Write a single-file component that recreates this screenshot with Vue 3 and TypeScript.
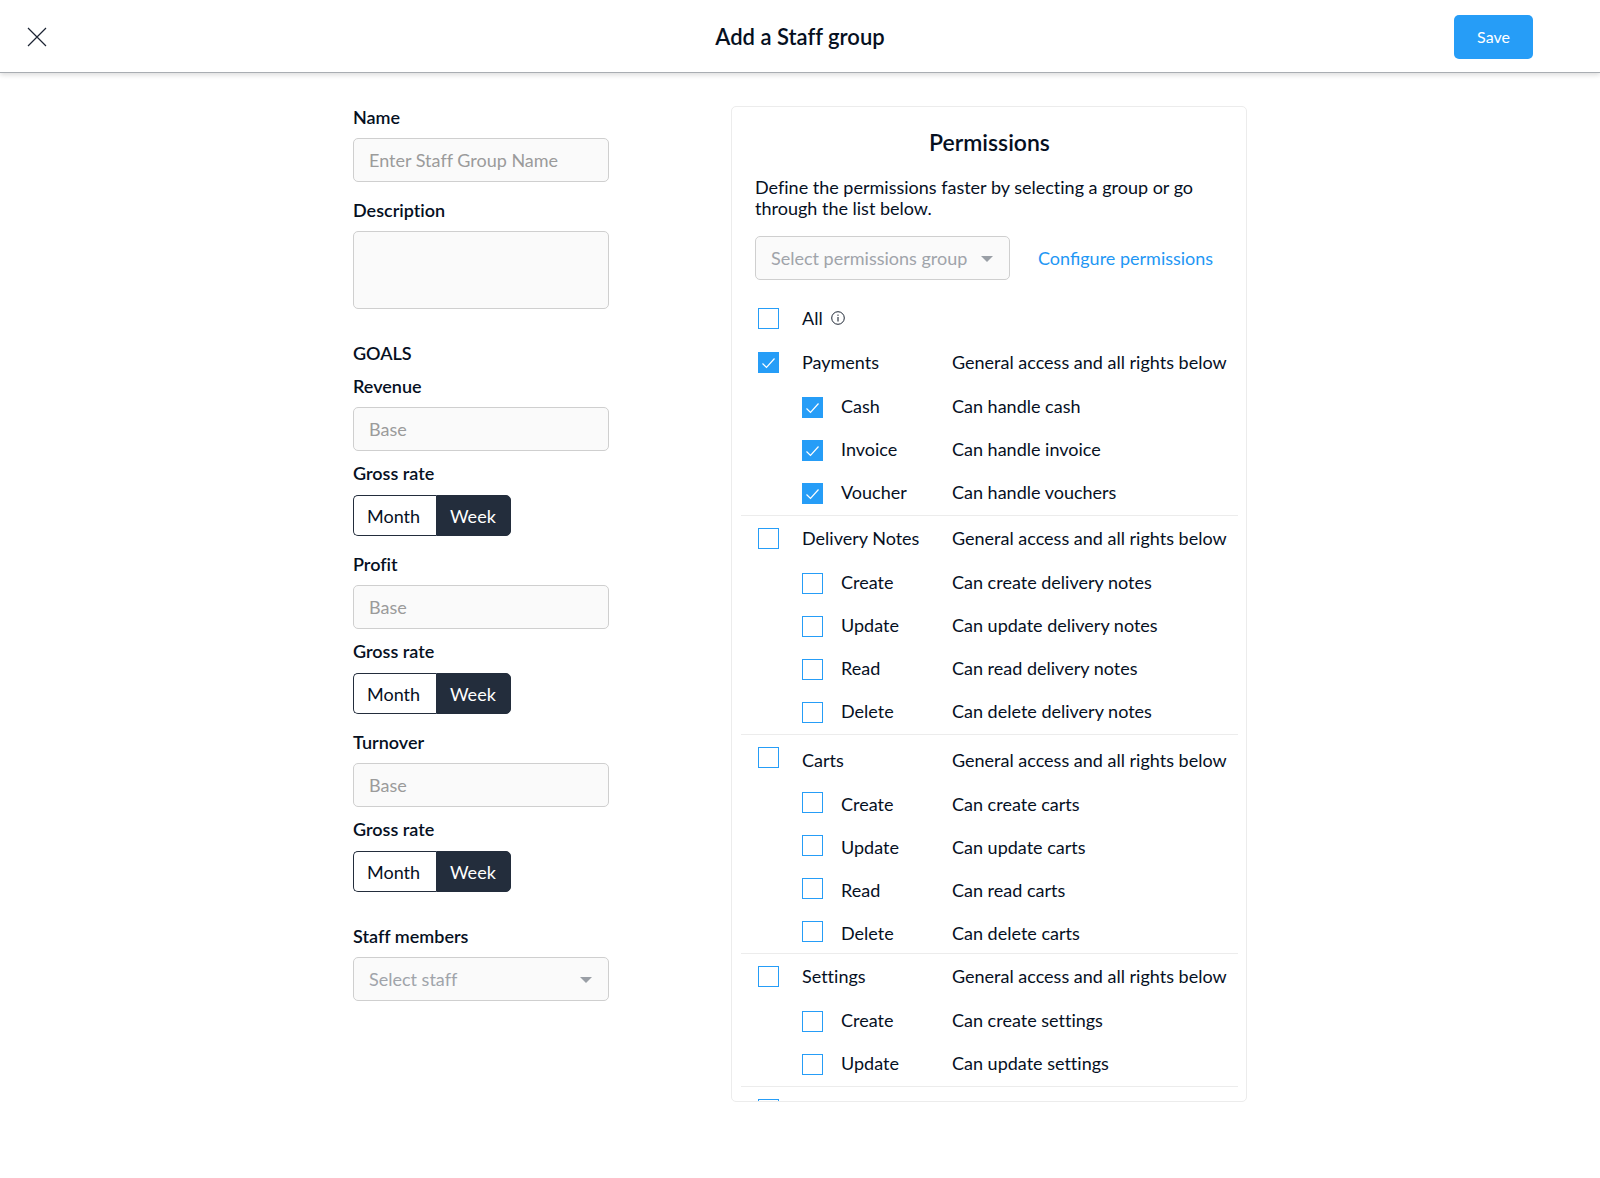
<script setup lang="ts">
import { reactive, ref } from 'vue'

type Period = 'Month' | 'Week'

interface Goal {
  id: string
  label: string
  base: string
  period: Period
}

interface Permission {
  id: string
  label: string
  hint: string
  checked: boolean
}

interface PermissionGroup extends Permission {
  loose?: boolean
  items: Permission[]
}

const periods: Period[] = ['Month', 'Week']

const name = ref('')
const description = ref('')
const staff = ref('')
const preset = ref('')
const all = ref(false)
const other = ref(false)

const goals = reactive<Goal[]>([
  { id: 'revenue', label: 'Revenue', base: '', period: 'Week' },
  { id: 'profit', label: 'Profit', base: '', period: 'Week' },
  { id: 'turnover', label: 'Turnover', base: '', period: 'Week' },
])

function makeGroup(
  label: string,
  rows: [string, string][],
  checked = false,
  loose = false,
): PermissionGroup {
  const id = label.toLowerCase().replace(/\s+/g, '-')
  return {
    id,
    label,
    hint: 'General access and all rights below',
    checked,
    loose,
    items: rows.map(([item, hint]) => ({
      id: `${id}-${item.toLowerCase()}`,
      label: item,
      hint,
      checked,
    })),
  }
}

const groups = reactive<PermissionGroup[]>([
  makeGroup(
    'Payments',
    [
      ['Cash', 'Can handle cash'],
      ['Invoice', 'Can handle invoice'],
      ['Voucher', 'Can handle vouchers'],
    ],
    true,
  ),
  makeGroup('Delivery Notes', [
    ['Create', 'Can create delivery notes'],
    ['Update', 'Can update delivery notes'],
    ['Read', 'Can read delivery notes'],
    ['Delete', 'Can delete delivery notes'],
  ]),
  makeGroup(
    'Carts',
    [
      ['Create', 'Can create carts'],
      ['Update', 'Can update carts'],
      ['Read', 'Can read carts'],
      ['Delete', 'Can delete carts'],
    ],
    false,
    true,
  ),
  makeGroup('Settings', [
    ['Create', 'Can create settings'],
    ['Update', 'Can update settings'],
  ]),
])
</script>

<template>
  <div class="page">
    <header class="topbar">
      <button class="close" type="button" aria-label="Close">
        <svg width="20" height="20" viewBox="0 0 20 20" fill="none" stroke="currentColor" stroke-width="1.2">
          <path d="M1 1 19 19M19 1 1 19" />
        </svg>
      </button>
      <h1 class="title">Add a Staff group</h1>
      <button class="save" type="submit" form="staff-form">Save</button>
    </header>

    <main class="content">
      <form id="staff-form" class="form" @submit.prevent>
        <div class="field">
          <label class="label" for="name">Name</label>
          <input id="name" v-model="name" class="control" type="text" placeholder="Enter Staff Group Name" />
        </div>
        <div class="field field--description">
          <label class="label" for="description">Description</label>
          <textarea id="description" v-model="description" class="control control--area"></textarea>
        </div>

        <h2 class="label goals-title">GOALS</h2>
        <section v-for="goal in goals" :key="goal.id" class="goal">
          <div class="field">
            <label class="label" :for="goal.id">{{ goal.label }}</label>
            <input :id="goal.id" v-model="goal.base" class="control" type="text" placeholder="Base" />
          </div>
          <fieldset class="rate">
            <legend class="label">Gross rate</legend>
            <div class="toggle">
              <label v-for="period in periods" :key="period" class="toggle-option">
                <input v-model="goal.period" type="radio" :name="`${goal.id}-period`" :value="period" />
                <span>{{ period }}</span>
              </label>
            </div>
          </fieldset>
        </section>

        <div class="field field--staff">
          <label class="label" for="staff">Staff members</label>
          <div class="select">
            <select id="staff" v-model="staff" class="control control--select">
              <option value="">Select staff</option>
            </select>
            <svg class="caret" width="12" height="6" viewBox="0 0 12 6" fill="currentColor">
              <path d="M0 0h12L6 6z" />
            </svg>
          </div>
        </div>
      </form>

      <section class="panel">
        <h2 class="panel-title">Permissions</h2>
        <p class="intro">
          Define the permissions faster by selecting a group or go through the list below.
        </p>
        <div class="preset">
          <div class="select">
            <select v-model="preset" class="control control--select" aria-label="Permissions group">
              <option value="">Select permissions group</option>
            </select>
            <svg class="caret" width="12" height="6" viewBox="0 0 12 6" fill="currentColor">
              <path d="M0 0h12L6 6z" />
            </svg>
          </div>
          <a class="link" href="#">Configure permissions</a>
        </div>

        <div class="row row--head row--all">
          <input id="all" v-model="all" class="box" type="checkbox" />
          <label class="all-label" for="all">
            All
            <svg width="14" height="14" viewBox="0 0 14 14" fill="none" stroke="currentColor">
              <circle cx="7" cy="7" r="6.3" stroke-width="0.9" />
              <path d="M7 6v4.5M7 3.6v1.2" stroke-width="1" />
            </svg>
          </label>
        </div>

        <div v-for="group in groups" :key="group.id" class="group" :class="{ 'group--loose': group.loose }">
          <div class="row row--head">
            <input :id="group.id" v-model="group.checked" class="box" type="checkbox" />
            <label :for="group.id">{{ group.label }}</label>
            <span>{{ group.hint }}</span>
          </div>
          <div v-for="item in group.items" :key="item.id" class="row row--item">
            <input :id="item.id" v-model="item.checked" class="box" type="checkbox" />
            <label :for="item.id">{{ item.label }}</label>
            <span>{{ item.hint }}</span>
          </div>
        </div>
        <div class="group">
          <div class="row row--head">
            <input v-model="other" class="box" type="checkbox" aria-label="Other permissions" />
          </div>
        </div>
      </section>
    </main>
  </div>
</template>

<style>
body {
  margin: 0;
  background: #fff;
}
</style>

<style scoped>
.page {
  min-height: 100vh;
  color: #06101f;
  font-family: Lato, 'Liberation Sans', sans-serif;
  font-size: 18px;
  font-variant-ligatures: none;
  line-height: 22px;
}

.page *,
.page *::before {
  box-sizing: border-box;
}

button,
input,
select,
textarea {
  font: inherit;
}

.topbar {
  display: grid;
  grid-template-columns: 1fr auto 1fr;
  align-items: center;
  height: 73px;
  padding: 2px 67px 0 27px;
  border-bottom: 1px solid #a9adb2;
  box-shadow: 0 2px 5px rgba(0, 0, 0, 0.14);
}

.close {
  display: flex;
  justify-self: start;
  padding: 0;
  border: 0;
  background: none;
  color: #1c2433;
}

.title,
.panel-title {
  margin: 0;
  font-size: 22px;
  font-weight: 600;
  line-height: 26px;
}

.title {
  margin-left: 40px;
}

.save {
  justify-self: end;
  width: 79px;
  height: 44px;
  padding: 0;
  border: 0;
  border-radius: 5px;
  background: #269df7;
  color: #fff;
  font-size: 16px;
}

.content {
  display: flex;
  justify-content: center;
  align-items: flex-start;
  gap: 122px;
  padding-top: 33px;
}

.form {
  width: 256px;
}

.field {
  display: flex;
  flex-direction: column;
  gap: 10px;
}

.label {
  margin: 0;
  padding: 0;
  font-size: 18px;
  font-weight: 600;
  line-height: 22px;
}

.control {
  display: block;
  width: 100%;
  height: 44px;
  margin: 0;
  padding: 0 15px;
  border: 1px solid #cfcfcf;
  border-radius: 5px;
  background: #fafafa;
  color: #06101f;
  outline: 0;
}

.control::placeholder {
  color: #9b9b9b;
  opacity: 1;
}

.control--area {
  height: 78px;
  resize: none;
}

.control--select {
  appearance: none;
  color: #a0a4aa;
}

.select {
  position: relative;
}

.caret {
  position: absolute;
  top: 20px;
  right: 17px;
  color: #9a9fa6;
  pointer-events: none;
}

.field--description {
  margin-top: 17px;
}

.goals-title {
  margin-top: 33px;
  margin-bottom: 11px;
}

.goal {
  margin-bottom: 17px;
}

.rate {
  min-width: 0;
  margin: 11px 0 0;
  padding: 0;
  border: 0;
}

.toggle {
  display: inline-flex;
  margin-top: 11px;
  vertical-align: top;
}

.toggle-option {
  position: relative;
}

.toggle-option input {
  position: absolute;
  inset: 0;
  margin: 0;
  opacity: 0;
}

.toggle-option span {
  display: block;
  min-width: 75px;
  height: 41px;
  padding: 0 13px;
  border: 1px solid #232d3c;
  line-height: 41px;
}

.toggle-option:first-child span {
  min-width: 83px;
  border-right: 0;
  border-radius: 5px 0 0 5px;
}

.toggle-option:last-child span {
  border-radius: 0 5px 5px 0;
}

.toggle-option input:checked + span {
  background: #232d3c;
  color: #fff;
}

.field--staff {
  margin-top: 33px;
}

.panel {
  width: 516px;
  max-height: calc(100vh - 182px);
  padding: 0 8px 0 9px;
  box-sizing: border-box;
  overflow: hidden auto;
  scrollbar-width: none;
  border: 1px solid #ececec;
  border-radius: 5px;
}

.panel-title {
  margin-top: 22px;
  font-size: 23px;
  text-align: center;
}

.intro {
  margin: 22px 14px 17px;
  line-height: 21px;
}

.preset {
  display: flex;
  align-items: center;
  gap: 28px;
  margin: 0 14px 28px;
}

.preset .select {
  width: 255px;
}

.link {
  color: #1f97f4;
  font-variant-ligatures: normal;
  line-height: 24px;
  text-decoration: none;
}

.group {
  display: grid;
  gap: 22px;
  padding: 12px 0 11px;
  border-top: 1px solid #ececec;
}

.row--all + .group {
  padding-top: 0;
  border-top: 0;
}

.row {
  display: grid;
  align-items: start;
  height: 21px;
}

.row--head {
  grid-template-columns: 44px 150px 1fr;
  height: 23px;
  padding-left: 17px;
  line-height: 20px;
}

.row--item {
  grid-template-columns: 39px 111px 1fr;
  padding-left: 61px;
  line-height: 18px;
}

.row--all {
  margin-bottom: 21px;
}

.group--loose .row--head {
  line-height: 26px;
}

.group--loose .row--item {
  line-height: 24px;
}

.all-label {
  display: flex;
  align-items: center;
  gap: 8px;
}

.box {
  appearance: none;
  width: 21px;
  height: 21px;
  margin: 0;
  border: 1px solid #269df7;
  background: #fff;
}

.box:checked {
  background: #269df7
    url("data:image/svg+xml,%3Csvg xmlns='http://www.w3.org/2000/svg' viewBox='0 0 19 19' fill='none' stroke='white' stroke-width='1.2'%3E%3Cpath d='M3.5 10.5 7.5 14.5 15.5 5.5'/%3E%3C/svg%3E")
    center / 19px 19px no-repeat;
}
</style>
